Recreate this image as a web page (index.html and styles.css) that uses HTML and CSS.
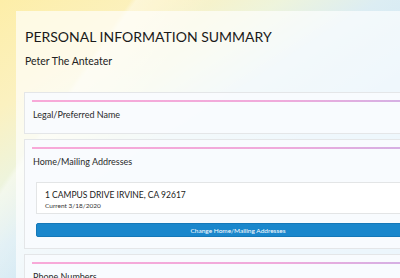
FILE: index.html
```html
<!DOCTYPE html>
<html lang="en">
<head>
    <meta charset="UTF-8">
    <meta name="viewport" content="width=device-width, initial-scale=1.0">
    <title>Personal Information Summary</title>
    <link rel="stylesheet" href="styles.css">
</head>
<body>
    <div class="page">
        <div class="panel">
            <h1 class="title">PERSONAL INFORMATION SUMMARY</h1>
            <p class="student">Peter The Anteater</p>

            <div class="card">
                <div class="rule"></div>
                <h2 class="card-title">Legal/Preferred Name</h2>
            </div>

            <div class="card">
                <div class="rule"></div>
                <h2 class="card-title">Home/Mailing Addresses</h2>
                <div class="address">
                    <div class="address-line">1 CAMPUS DRIVE IRVINE, CA 92617</div>
                    <div class="address-date">Current 3/18/2020</div>
                </div>
                <button class="btn">Change Home/Mailing Addresses</button>
            </div>

            <div class="card">
                <div class="rule"></div>
                <h2 class="card-title">Phone Numbers</h2>
            </div>
        </div>
    </div>
</body>
</html>
```

FILE: styles.css
```css
body {
    margin: 0;
    height: 278px;
    overflow: hidden;
    font-family: Lato, "Open Sans", sans-serif;
    color: #222;
    background:
        linear-gradient(125deg, rgba(255,255,255,0) 22%, rgba(255,255,255,0.4) 23%, rgba(255,255,255,0) 36%),
        linear-gradient(147deg, #fdeea8 0%, #fbf1c0 20%, #eef4dc 34%, #dcedf3 46%, #cfe7f6 65%, #c5e2f6 100%);
}

.page {
    padding: 11px 0 0 16px;
}

.panel {
    width: 428px;
    min-height: 300px;
    padding: 17px 8px 0 8px;
    background: rgba(255, 255, 255, 0.66);
}

.title {
    margin: 0 0 0 1px;
    font-size: 14px;
    font-weight: 400;
    line-height: 18px;
    color: #1a1a1a;
}

.student {
    margin: 8px 0 0 1px;
    font-size: 10.5px;
    line-height: 14px;
    color: #222;
}

.student + .card {
    margin-top: 24px;
}

.card {
    margin-bottom: 5px;
    padding: 7px 11px 11px 7px;
    border: 1px solid #e4e6e8;
    background: rgba(248, 251, 254, 0.92);
}

.rule {
    height: 2px;
    background: linear-gradient(90deg, #f8a9d8 0%, #f0aadb 60%, #cdb2e6 100%);
}

.card-title {
    margin: 6px 0 0 1px;
    font-size: 9px;
    font-weight: 400;
    line-height: 14px;
    color: #2a2a2a;
}

.address {
    margin: 13px 0 0 4px;
    padding: 6px 8px 3px 8px;
    border: 1px solid #e3e5e6;
    background: #fff;
}

.address-line {
    font-size: 8.5px;
    line-height: 12px;
    color: #1a1a1a;
}

.address-date {
    font-size: 6.5px;
    line-height: 9px;
    color: #333;
}

.btn {
    display: block;
    width: calc(100% - 4px);
    margin: 9px 0 0 4px;
    height: 14px;
    padding: 0;
    border: 1px solid #1578b8;
    border-radius: 2px;
    background: #1a87cc;
    color: #fff;
    font-family: Lato, "Open Sans", sans-serif;
    font-size: 6.5px;
    cursor: pointer;
}
```
